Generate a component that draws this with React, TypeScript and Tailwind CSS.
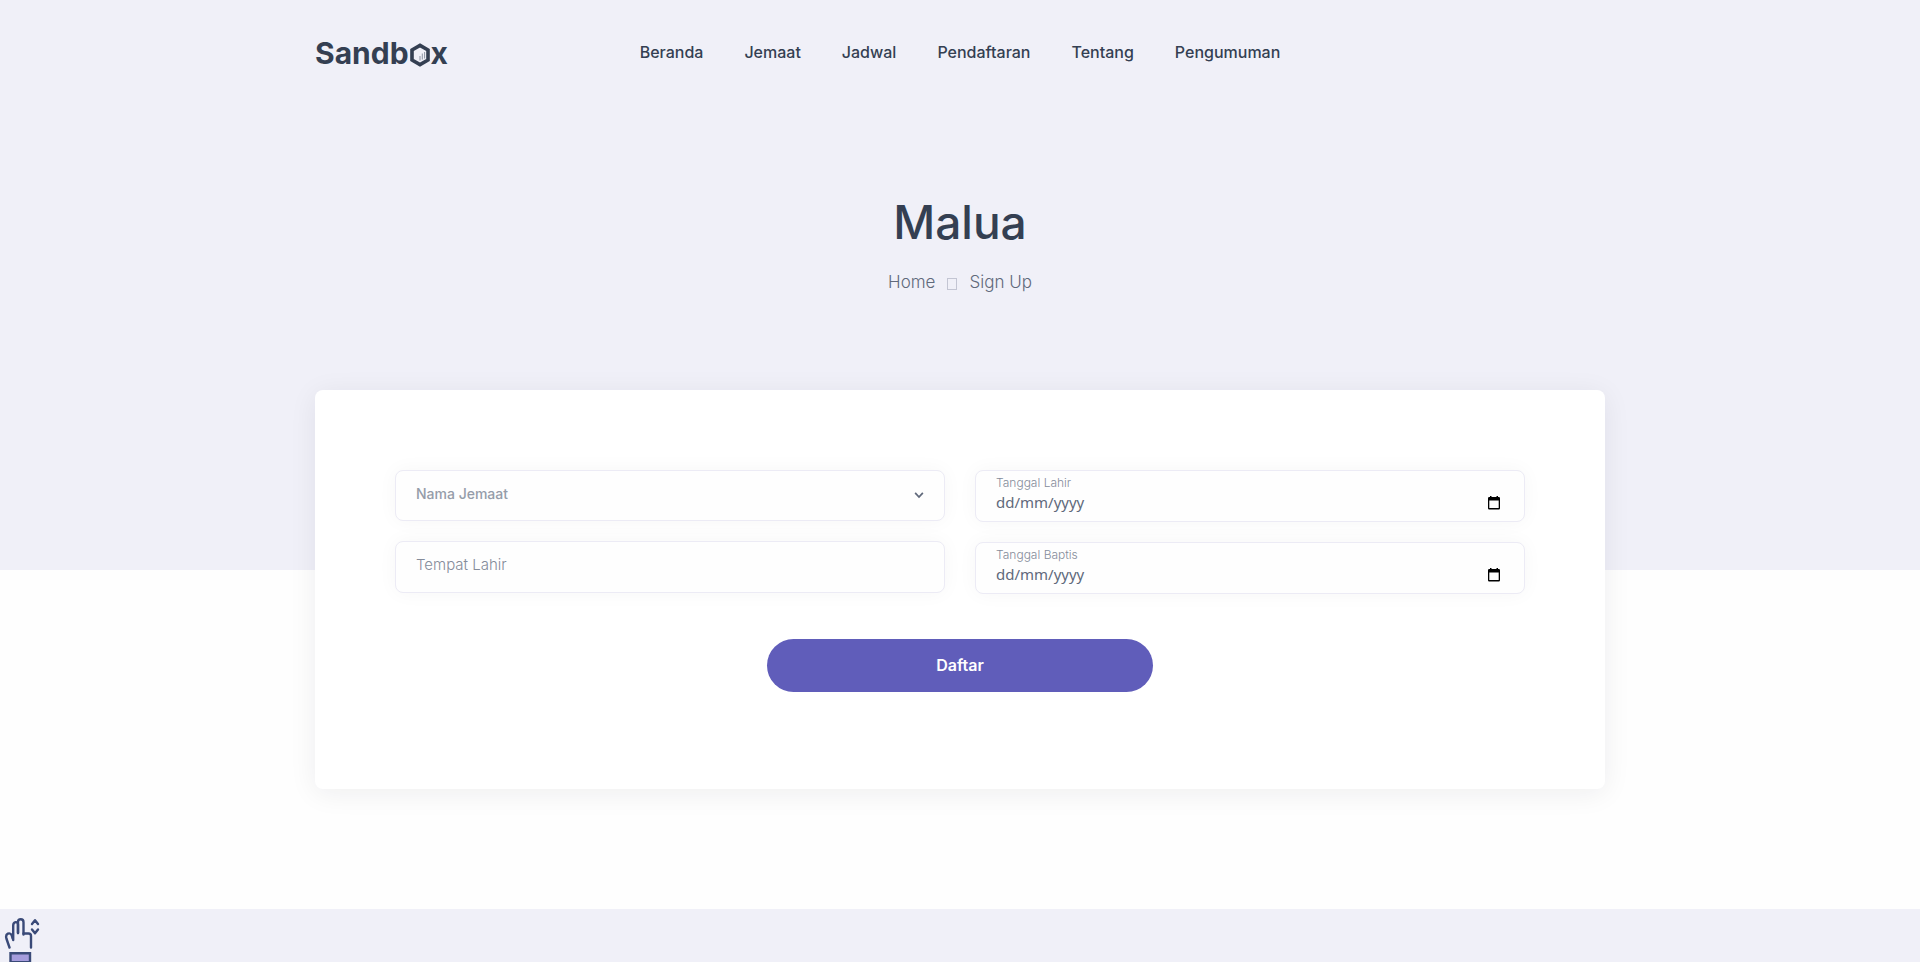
import React from "react";

const links = ["Beranda", "Jemaat", "Jadwal", "Pendaftaran", "Tentang", "Pengumuman"];

const fieldBox =
  "rounded-lg border border-[#ecebf5] bg-[#fefefe] shadow-[0_0_20px_rgba(30,34,40,0.04)]";

function Logo() {
  return (
    <a
      href="#"
      aria-label="Sandbox"
      className="flex items-center pt-[2px] text-[30px] leading-9 font-bold text-[#343f52]"
    >
      <span>Sandb</span>
      <svg viewBox="0 0 20 24" className="mx-px mt-1 h-6 w-5" fill="none" aria-hidden="true">
        <path d="M10 2.4 18 7v10l-8 4.6L2 17V7z" stroke="#343f52" strokeWidth="3.6" />
        <path d="M10 17.500v-4.500M12.300 16.500v-6M14.600 15.500V9" stroke="#8d94a3" strokeWidth="1" />
      </svg>
      <span>x</span>
    </a>
  );
}

function DateField({ id, label }: { id: string; label: string }) {
  return (
    <div className={`${fieldBox} flex h-[52px] items-start justify-between px-5`}>
      <div className="flex flex-1 flex-col pt-1">
        <label htmlFor={id} className="text-xs leading-4 font-light text-[#858c9a]">
          {label}
        </label>
        <input
          id={id}
          type="text"
          placeholder="dd/mm/yyyy"
          className="w-full bg-transparent font-['Noto_Sans',sans-serif] text-[15px] leading-[22px] text-[#60697b] outline-none placeholder:text-[#60697b]"
        />
      </div>
      <button type="button" aria-label={`Pilih ${label}`} className="mt-[25px] mr-1">
        <svg viewBox="0 0 12 14" className="h-[14px] w-3" aria-hidden="true">
          <path
            fillRule="evenodd"
            fill="#000"
            d="M2 0h1.5v1h5V0H10v1h.8A1.200 1.200 0 0 1 12 2.200v10A1.200 1.200 0 0 1 10.800 13.400H1.200A1.200 1.200 0 0 1 0 12.200v-10A1.200 1.200 0 0 1 1.200 1H2zM1.300 4.500v7.600h9.400V4.500z"
          />
        </svg>
      </button>
    </div>
  );
}

function HandIcon() {
  return (
    <svg
      viewBox="0 0 36 48"
      className="h-12 w-9"
      fill="none"
      stroke="#3a4a78"
      strokeWidth="2.400"
      strokeLinecap="round"
      strokeLinejoin="round"
      aria-hidden="true"
    >
      <path d="M5.500 29.500 2.400 20.500c-1.400-5 3.600-6.800 5.400-3L8.600 20.500" />
      <path d="M9.200 22V7.500c0-4 4.800-4.500 4.800-1V15" />
      <path d="M14 15V4.200c0-4 5.500-4 5.500 0V16.500" />
      <path d="M19.500 15.500h5c1.500 0 2.500 1 2.500 2.500v11.500" />
      <path d="m28 6 3-3.800L34 6M28 11.500l3 3.800 3-3.800" />
      <path d="M6.500 35.200h19.500v9H6.500z" fill="#a59cdc" strokeLinejoin="miter" />
    </svg>
  );
}

export default function App() {
  return (
    <div className="flex min-h-screen flex-col bg-[#fefefe] font-['Inter','Liberation_Sans',sans-serif] text-[#60697b]">
      <section className="bg-[#f0f0f8] px-4 pb-[180px]">
        <header className="mx-auto grid max-w-[1290px] grid-cols-[1fr_auto_1fr] items-center pt-[33px]">
          <Logo />
          <nav className="flex gap-[41px] text-base leading-6 font-medium text-[#343f52]">
            {links.map((link) => (
              <a key={link} href="#">
                {link}
              </a>
            ))}
          </nav>
        </header>
        <div className="flex flex-col items-center pt-[121px] pb-24">
          <h1 className="text-[46px] leading-[60px] font-medium text-[#343f52]">Malua</h1>
          <nav
            aria-label="Breadcrumb"
            className="mt-[18px] flex items-center gap-3 text-[17px] leading-6 font-light"
          >
            <a href="#">Home</a>
            <span aria-hidden="true" className="mt-1 h-3 w-[10px] border border-[#c3c5d3]" />
            <span>Sign Up</span>
          </nav>
        </div>
      </section>

      <main className="px-4 pb-[120px]">
        <form
          onSubmit={(event) => event.preventDefault()}
          className="mx-auto -mt-[180px] flex max-w-[1290px] flex-col items-center rounded-lg bg-white px-20 pt-20 pb-[97px] shadow-[0_4px_28px_rgba(30,34,40,0.07)]"
        >
          <div className="grid w-full grid-cols-2 gap-x-[30px]">
            <div className="flex flex-col gap-5">
              <div className={`${fieldBox} grid h-[51px] items-center`}>
                <select
                  aria-label="Nama Jemaat"
                  defaultValue=""
                  className="col-start-1 row-start-1 h-full w-full appearance-none bg-transparent px-5 pb-1 text-sm font-medium text-[#959ca9] outline-none"
                >
                  <option value="">Nama Jemaat</option>
                </select>
                <svg
                  viewBox="0 0 8 6"
                  className="pointer-events-none col-start-1 row-start-1 mr-5 h-[7px] w-[10px] justify-self-end"
                  fill="none"
                  stroke="#60697b"
                  strokeWidth="1.500"
                  aria-hidden="true"
                >
                  <path d="m.7.8 3.300 3.500L7.300.8" />
                </svg>
              </div>
              <input
                type="text"
                aria-label="Tempat Lahir"
                placeholder="Tempat Lahir"
                className={`${fieldBox} h-[52px] px-5 pb-1.5 text-[15px] font-light outline-none placeholder:text-[#858c9a]`}
              />
            </div>
            <div className="flex flex-col gap-5">
              <DateField id="tanggal-lahir" label="Tanggal Lahir" />
              <DateField id="tanggal-baptis" label="Tanggal Baptis" />
            </div>
          </div>
          <button
            type="submit"
            className="mt-[45px] h-[53px] w-full max-w-[386px] rounded-full bg-[#605dba] pb-0.5 text-base font-semibold text-white"
          >
            Daftar
          </button>
        </form>
      </main>

      <footer className="h-0 flex-1 overflow-hidden bg-[#f0f0f8] px-1 pt-[9px]">
        <HandIcon />
      </footer>
    </div>
  );
}
